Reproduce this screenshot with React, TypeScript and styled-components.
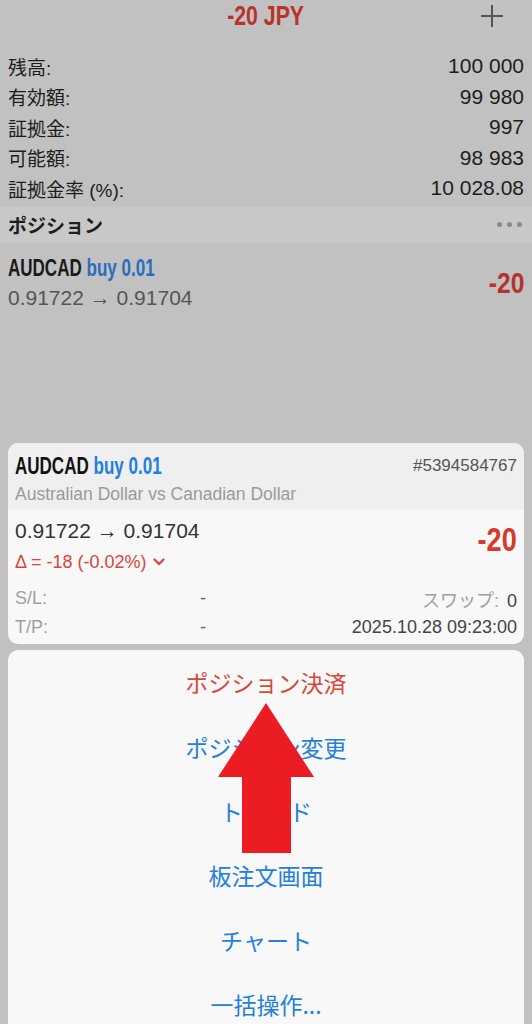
import React from "react";
import styled, { createGlobalStyle } from "styled-components";

const GlobalStyle = createGlobalStyle`
  html, body { margin: 0; padding: 0; background: #c1c1c1; }
  body { font-family: "Liberation Sans", "Noto Sans CJK JP", sans-serif; }
  * { box-sizing: border-box; }
`;

const Page = styled.div`
  position: relative;
  width: 100%;
  height: 1024px;
  overflow: hidden;
  background: #c1c1c1;
`;

const Dimmed = styled.div`
  height: 443px;
  display: flex;
  flex-direction: column;
`;

/* Condensed bold face: approximated by horizontally compressing Liberation Sans Bold */
const Condensed = styled.span<{ $origin?: string; $scale?: number }>`
  display: inline-block;
  white-space: nowrap;
  font-family: "Liberation Sans", sans-serif;
  font-weight: 700;
  transform: scaleX(${(p) => p.$scale ?? 0.82});
  transform-origin: ${(p) => p.$origin || "left"} center;
`;

const Header = styled.div`
  height: 32px;
  display: grid;
  grid-template-columns: 1fr auto 1fr;
  align-items: center;
`;

const Title = styled.div`
  grid-column: 2;
  font-size: 28px;
  line-height: 32px;
  color: #b93329;
`;

const PlusButton = styled.div`
  grid-column: 3;
  justify-self: end;
  margin-right: 28px;
  width: 24px;
  height: 24px;
  display: flex;
  align-items: center;
  justify-content: center;
`;

const InfoList = styled.div`
  margin-top: 19px;
  display: flex;
  flex-direction: column;
`;

const InfoRow = styled.div`
  height: 30.5px;
  padding: 0 8px;
  display: flex;
  justify-content: space-between;
  align-items: center;
  color: #1d1d1d;
`;

const Label = styled.span`
  font-size: 19px;
`;

const Value = styled.span`
  font-size: 21px;
`;

const SectionBand = styled.div`
  margin-top: 3px;
  height: 36px;
  padding: 0 10px 0 8px;
  background: #c8c8c8;
  display: flex;
  justify-content: space-between;
  align-items: center;
`;

const SectionTitle = styled.span`
  font-size: 19px;
  font-weight: 700;
  color: #1d1d1d;
`;

const Dots = styled.div`
  display: flex;
  gap: 5px;
`;

const Dot = styled.span`
  width: 5px;
  height: 5px;
  border-radius: 50%;
  background: #8a8a8a;
`;

const PositionItem = styled.div`
  padding: 12px 8px 0 8px;
  display: flex;
  justify-content: space-between;
  align-items: center;
`;

const PosLeft = styled.div`
  display: flex;
  flex-direction: column;
`;

const SymbolLine = styled.div<{ $dim?: boolean }>`
  font-size: 23px;
  line-height: 26px;
  color: ${(p) => (p.$dim ? "#1a1a1a" : "#111")};
`;

const Side = styled.span<{ $dim?: boolean }>`
  color: ${(p) => (p.$dim ? "#2a6dbd" : "#1f7fdf")};
`;

const PriceLine = styled.div<{ $dim?: boolean }>`
  margin-top: ${(p) => (p.$dim ? 4 : 0)}px;
  font-size: 21px;
  line-height: 26px;
  color: ${(p) => (p.$dim ? "#555" : "#333")};
`;

const Profit = styled.div<{ $size: number; $dim?: boolean }>`
  font-size: ${(p) => p.$size}px;
  line-height: 36px;
  color: ${(p) => (p.$dim ? "#b5332a" : "#d9392a")};
`;

const Cards = styled.div`
  padding: 0 8px;
  display: flex;
  flex-direction: column;
  gap: 6px;
`;

const Card = styled.div`
  border-radius: 10px;
  overflow: hidden;
  background: #f8f8f8;
`;

const CardHead = styled.div`
  background: #efefef;
  padding: 10px 7px 5px 7px;
`;

const HeadTop = styled.div`
  display: flex;
  justify-content: space-between;
  align-items: center;
`;

const Ticket = styled.span`
  font-size: 17px;
  color: #555;
`;

const Description = styled.div`
  margin-top: 4px;
  font-size: 17.5px;
  line-height: 22px;
  color: #9a9a9a;
`;

const CardBody = styled.div`
  padding: 8px 7px 2px 7px;
`;

const PriceBlock = styled.div`
  display: flex;
  justify-content: space-between;
  align-items: flex-start;
`;

const ProfitWrap = styled.div`
  margin-top: 4px;
`;

const DeltaLine = styled.div`
  margin-top: 6px;
  display: flex;
  align-items: center;
  gap: 6px;
  font-size: 18px;
  line-height: 24px;
  color: #d9453a;
`;

const DetailRow = styled.div<{ $first?: boolean }>`
  margin-top: ${(p) => (p.$first ? 10 : 0)}px;
  height: 29px;
  display: grid;
  grid-template-columns: 185px auto 1fr;
  align-items: center;
  font-size: 18px;
`;

const DetailLabel = styled.span`
  color: #a0a0a0;
`;

const Dash = styled.span`
  color: #666;
`;

const DetailValue = styled.span`
  justify-self: end;
  color: #444;
`;

const Muted = styled.span`
  color: #a0a0a0;
  margin-right: 8px;
`;

const MenuCard = styled(Card)`
  display: flex;
  flex-direction: column;
  height: 420px;
`;

const MenuItem = styled.div<{ $danger?: boolean }>`
  height: 64.4px;
  display: flex;
  align-items: center;
  justify-content: center;
  font-family: "Noto Sans CJK JP", sans-serif;
  font-size: 23px;
  color: ${(p) => (p.$danger ? "#d9473a" : "#2580d8")};
`;

const Arrow = styled.svg`
  position: absolute;
  left: 218px;
  top: 703px;
  width: 96px;
  height: 150px;
`;

const rows = [
  ["残高:", "100 000"],
  ["有効額:", "99 980"],
  ["証拠金:", "997"],
  ["可能額:", "98 983"],
  ["証拠金率 (%):", "10 028.08"],
];

const menu = ["ポジション決済", "ポジション変更", "トレード", "板注文画面", "チャート", "一括操作..."];

export default function App() {
  return (
    <Page>
      <GlobalStyle />
      <Dimmed>
        <Header>
          <Title>
            <Condensed $origin="center" $scale={0.76}>
              -20 JPY
            </Condensed>
          </Title>
          <PlusButton>
            <svg width="24" height="24" viewBox="0 0 24 24">
              <path d="M12 1v22M1 12h22" stroke="#555" strokeWidth="2" />
            </svg>
          </PlusButton>
        </Header>
        <InfoList>
          {rows.map(([l, v]) => (
            <InfoRow key={l}>
              <Label>{l}</Label>
              <Value>{v}</Value>
            </InfoRow>
          ))}
        </InfoList>
        <SectionBand>
          <SectionTitle>ポジション</SectionTitle>
          <Dots>
            <Dot />
            <Dot />
            <Dot />
          </Dots>
        </SectionBand>
        <PositionItem>
          <PosLeft>
            <SymbolLine $dim>
              <Condensed $scale={0.74}>
                AUDCAD <Side $dim>buy 0.01</Side>
              </Condensed>
            </SymbolLine>
            <PriceLine $dim>0.91722 → 0.91704</PriceLine>
          </PosLeft>
          <Profit $size={30} $dim>
            <Condensed $origin="right">-20</Condensed>
          </Profit>
        </PositionItem>
      </Dimmed>
      <Cards>
        <Card>
          <CardHead>
            <HeadTop>
              <SymbolLine>
                <Condensed $scale={0.74}>
                  AUDCAD <Side>buy 0.01</Side>
                </Condensed>
              </SymbolLine>
              <Ticket>#5394584767</Ticket>
            </HeadTop>
            <Description>Australian Dollar vs Canadian Dollar</Description>
          </CardHead>
          <CardBody>
            <PriceBlock>
              <div>
                <PriceLine>0.91722 → 0.91704</PriceLine>
                <DeltaLine>
                  Δ = -18 (-0.02%)
                  <svg width="12" height="8" viewBox="0 0 12 8">
                    <path d="M1.5 1.5l4.5 4.5 4.5-4.5" fill="none" stroke="#d9453a" strokeWidth="2.2" strokeLinecap="round" strokeLinejoin="round" />
                  </svg>
                </DeltaLine>
              </div>
              <ProfitWrap>
                <Profit $size={33}>
                  <Condensed $origin="right">-20</Condensed>
                </Profit>
              </ProfitWrap>
            </PriceBlock>
            <DetailRow $first>
              <DetailLabel>S/L:</DetailLabel>
              <Dash>-</Dash>
              <DetailValue>
                <Muted>スワップ:</Muted>0
              </DetailValue>
            </DetailRow>
            <DetailRow>
              <DetailLabel>T/P:</DetailLabel>
              <Dash>-</Dash>
              <DetailValue>2025.10.28 09:23:00</DetailValue>
            </DetailRow>
          </CardBody>
        </Card>
        <MenuCard>
          {menu.map((m, i) => (
            <MenuItem key={m} $danger={i === 0}>
              {m}
            </MenuItem>
          ))}
        </MenuCard>
      </Cards>
      <Arrow viewBox="0 0 96 150">
        <path d="M48 0L96 74H73V150H24V74H0Z" fill="#ec1c24" />
      </Arrow>
    </Page>
  );
}
